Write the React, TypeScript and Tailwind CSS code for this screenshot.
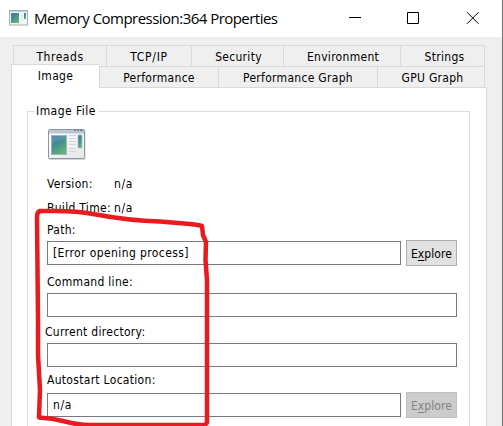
import type { ReactNode } from "react";

function Tab({ className, children }: { className: string; children: ReactNode }) {
  return (
    <div className={`flex shrink-0 justify-center whitespace-nowrap border-l border-t border-[#d9d9d9] ${className}`}>
      {children}
    </div>
  );
}

function Field({ label, labelClass = "", value, valueClass = "", className = "", button }: {
  label: string;
  labelClass?: string;
  value?: string;
  valueClass?: string;
  className?: string;
  button?: "on" | "off";
}) {
  return (
    <div className={className}>
      <div className={`h-4 whitespace-nowrap leading-4 ${labelClass}`}>{label}</div>
      <div className="mt-0.5 flex h-[26px] items-center gap-[5px]">
        <div className="flex h-6 flex-1 items-center border border-[#7a7a7a] pl-[5px]">
          <span className={`whitespace-nowrap leading-[22px] ${valueClass}`}>{value}</span>
        </div>
        {button && (
          <button
            className={`-mt-px h-[26px] w-[51px] border text-center leading-[26px] tracking-[0.1px] ${
              button === "on" ? "border-[#adadad] bg-[#e1e1e1]" : "border-[#bfbfbf] bg-[#cccccc] text-[#838383]"
            }`}
          >
            E<span className="underline underline-offset-2">x</span>plore
          </button>
        )}
      </div>
    </div>
  );
}

function AppIcon() {
  return (
    <svg className="h-8 w-[38px]" viewBox="0 0 38 32">
      <defs>
        <linearGradient id="teal" x1="0" y1="0" x2=".6" y2="1">
          <stop offset="0" stopColor="#3f73aa" />
          <stop offset=".5" stopColor="#438f91" />
          <stop offset="1" stopColor="#62b575" />
        </linearGradient>
        <linearGradient id="frame" x1="0" y1="0" x2="1" y2="1">
          <stop offset="0" stopColor="#ffffff" />
          <stop offset="1" stopColor="#e4e6e8" />
        </linearGradient>
      </defs>
      <rect x="1" y="1.5" width="36.5" height="29.5" rx="1" fill="#d3d5d7" />
      <rect x=".5" y=".5" width="36" height="29" rx="1" fill="url(#frame)" stroke="#8c969f" />
      <rect x="1" y="1" width="35" height="2.5" fill="#bec9d5" />
      <path d="M1 3.8H36" stroke="#929dab" strokeWidth=".7" />
      <path d="M26 1.5h2M29 1.5h2M32 1.5h3" stroke="#66778c" />
      <rect x="3.5" y="6.5" width="15" height="19" fill="url(#teal)" stroke="#a8b1be" />
      <path d="M4 15Q10 10 18 10V7H4Z" fill="#fff" opacity=".12" />
      <path d="M21 6.5h7M21 9.500h7M21 12.500h7M21 15.500h7M21 19.500h7M21 22.500h7" stroke="#d3d5d8" />
      <rect x="30" y="6" width="4" height="13" fill="url(#teal)" stroke="#b8c4cf" strokeWidth=".6" />
    </svg>
  );
}

export default function App() {
  return (
    <main className="relative flex h-[426px] w-[503px] flex-col overflow-hidden border-r border-[#707070] bg-[#efefef] font-['DejaVu_Sans_Condensed','DejaVu_Sans',sans-serif] text-[12px] tracking-[0.3px] text-black [font-stretch:condensed]">
      <header className="flex h-[37px] shrink-0 items-center bg-white pl-[9px]">
        <svg className="-mt-0.5 h-4 w-[19px]" viewBox="0 0 19 16">
          <rect x=".5" y=".5" width="18" height="14.5" fill="#f3f5f6" stroke="#a5adb6" />
          <path d="M1 1.5h17" stroke="#c8d0d7" />
          <rect x="2" y="3" width="8" height="10" fill="url(#teal)" />
          <path d="M12 4h2M12 6h2M12 8h2M12 10h2" stroke="#e1e3e5" />
          <rect x="15" y="3" width="2" height="6" fill="url(#teal)" />
        </svg>
        <h1 className="-mt-px ml-1.5 whitespace-nowrap font-['Open_Sans','Noto_Sans',sans-serif] text-[15px] leading-5 tracking-[-0.53px] [font-stretch:normal]">
          Memory Compression:364 Properties
        </h1>
        <svg className="-mt-0.5 ml-auto mr-[23px] h-3 w-[130px] shrink-0" viewBox="0 0 130 12" fill="none" stroke="#000">
          <path d="M0 5.5h12M58.5.5h11v11h-11zM118 .2l11.6 11.6M129.6.2L118 11.8" />
        </svg>
      </header>
      <nav className="mt-2 h-[42px] shrink-0">
        <div className="ml-[13px] flex h-[21px] w-[472px] border-r border-[#d9d9d9] leading-[22px]">
          <Tab className="w-[93px] tracking-[0.55px]">Threads</Tab>
          <Tab className="w-[85px] tracking-[0.7px]">TCP/IP</Tab>
          <Tab className="w-[92px] pl-0.5">Security</Tab>
          <Tab className="w-[117px] pl-0.5">Environment</Tab>
          <Tab className="w-[84px] pl-1">Strings</Tab>
        </div>
        <div className="ml-[11px] flex h-[21px] w-[474px] border-r border-[#d9d9d9] leading-[22px]">
          <Tab className="relative -mt-0.5 h-6 w-[88px] bg-white">Image</Tab>
          <Tab className="w-[119px]">Performance</Tab>
          <Tab className="w-[159px]">Performance Graph</Tab>
          <Tab className="w-[107px] pl-[3px]">GPU Graph</Tab>
        </div>
      </nav>
      <section className="ml-[11px] h-[339px] w-[476px] border-x border-t border-[#d9d9d9] bg-white pl-[15px] pt-[15px]">
        <fieldset className="w-[443px]">
          <div className="flex h-4 items-center">
            <span className="h-px w-[7px] bg-[#dcdcdc]" />
            <h2 className="relative w-[65px] whitespace-nowrap pl-0.5 leading-[18px] tracking-[0.45px]">Image File</h2>
            <span className="h-px flex-1 bg-[#dcdcdc]" />
          </div>
          <div className="-mt-2 h-[330px] border-x border-[#dcdcdc] pl-[19px] pr-3 pt-[18px]">
            <div className="ml-px h-8"><AppIcon /></div>
            <div className="mt-[15px] grid grid-cols-[67px_1fr] gap-y-2 whitespace-nowrap leading-4">
              <span>Version:</span><span className="tracking-[0.6px]">n/a</span>
              <span>Build Time:</span><span className="tracking-[0.6px]">n/a</span>
            </div>
            <Field className="mt-[6px]" label="Path:" value="[Error opening process]" valueClass="tracking-[0.4px]" button="on" />
            <Field className="mt-2" label="Command line:" />
            <Field className="mt-[6px]" label="Current directory:" labelClass="-ml-0.5" />
            <Field className="mt-1 [&>div:first-child]:mb-1" label="Autostart Location:" value="n/a" valueClass="tracking-[0.6px]" button="off" />
          </div>
        </fieldset>
      </section>
      <svg className="pointer-events-none absolute left-0 top-0 h-[426px] w-[503px]" viewBox="0 0 503 426" fill="none" stroke="#e81c1e" strokeWidth="4.5" strokeLinecap="round" strokeLinejoin="round">
        <path d="M39 417L40 390L38 355L38 320L37 217Q37 212 40 211L55 211Q78 211 93 214C120 219 137 221 160 221.500L190 224Q199 225 202 226L203 235L206 242L205.500 260L207 280V422.500L205 425H90Q78 425 65 421.500Q52 418 39 417.500" />
      </svg>
    </main>
  );
}
